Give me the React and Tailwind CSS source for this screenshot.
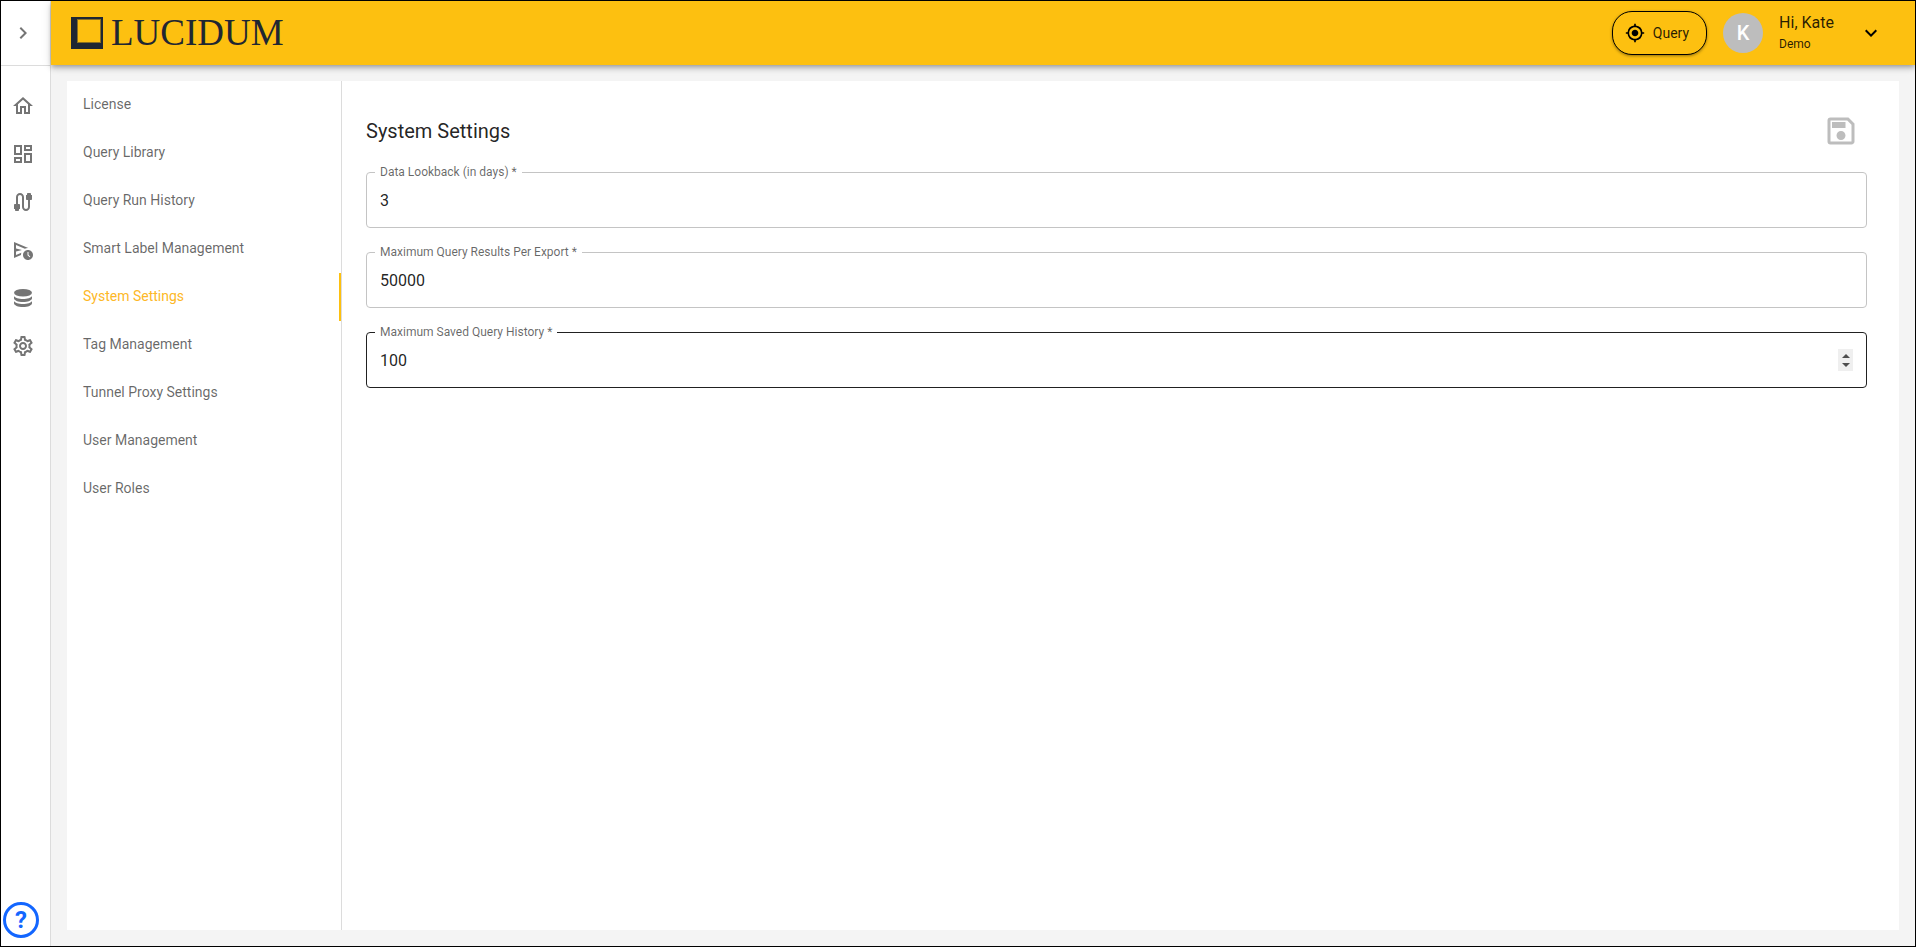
import React, { useRef } from 'react';
import {
  MdChevronRight,
  MdExpandMore,
  MdMyLocation,
  MdOutlineCable,
  MdOutlineDashboard,
  MdOutlineHome,
  MdOutlineSave,
  MdOutlineScheduleSend,
  MdOutlineSettings,
} from 'react-icons/md';

function DatabaseIcon({ size = 24 }) {
  return (
    <svg width={size} height={size} viewBox="0 0 24 24" fill="currentColor">
      <ellipse cx="12" cy="6.8" rx="9" ry="3.8" />
      <path d="M3 10c1 1.900 4.600 3 9 3s8-1.100 9-3v2.200c0 2.100-4 3.800-9 3.800s-9-1.700-9-3.800z" />
      <path d="M3 15c1 1.900 4.600 3 9 3s8-1.100 9-3v2.200c0 2.100-4 3.800-9 3.800s-9-1.700-9-3.800z" />
    </svg>
  );
}

function LogoMark() {
  return (
    <svg width="32" height="32" viewBox="0 0 32 32">
      <rect width="32" height="32" fill="#1f2732" />
      <rect x="6.5" y="2.5" width="23" height="23" fill="#fdc010" stroke="#8a7020" />
    </svg>
  );
}

const sideLinks = [
  { name: 'Home', icon: MdOutlineHome },
  { name: 'Dashboard', icon: MdOutlineDashboard },
  { name: 'Connectors', icon: MdOutlineCable },
  { name: 'Actions', icon: MdOutlineScheduleSend },
  { name: 'Data', icon: DatabaseIcon },
  { name: 'Settings', icon: MdOutlineSettings },
];

const menuItems = [
  'License',
  'Query Library',
  'Query Run History',
  'Smart Label Management',
  'System Settings',
  'Tag Management',
  'Tunnel Proxy Settings',
  'User Management',
  'User Roles',
];

const fields = [
  { id: 'lookback', label: 'Data Lookback (in days) *', value: 3 },
  { id: 'max-export', label: 'Maximum Query Results Per Export *', value: 50000 },
  { id: 'max-history', label: 'Maximum Saved Query History *', value: 100, active: true },
];

function Sidebar() {
  return (
    <aside className="flex w-[50px] shrink-0 flex-col border-r border-[#dcdcdc] bg-white text-[#757575]">
      <button
        type="button"
        aria-label="Expand menu"
        className="flex h-[65px] items-center border-b border-[#dcdcdc] pl-2.5"
      >
        <MdChevronRight size={24} />
      </button>
      <nav className="flex flex-col pt-4">
        {sideLinks.map(({ name, icon: Icon }) => (
          <a key={name} href="#" aria-label={name} className="flex h-12 items-center pl-2.5">
            <Icon size={24} />
          </a>
        ))}
      </nav>
      <button
        type="button"
        aria-label="Help"
        className="mt-auto mb-2 ml-0.5 flex size-9 items-center justify-center rounded-full border-3 border-[#1366ff] text-2xl font-bold text-[#1366ff]"
      >
        ?
      </button>
    </aside>
  );
}

function Header() {
  return (
    <header className="relative flex h-16 shrink-0 items-center justify-between bg-[#fdc010] pr-8 pl-5 shadow-[0_2px_4px_-1px_rgba(0,0,0,0.2),0_4px_5px_0_rgba(0,0,0,0.14),0_1px_10px_0_rgba(0,0,0,0.12)]">
      <a href="#" className="flex items-center gap-2 text-[#1f2732]">
        <LogoMark />
        <span className="font-['Liberation_Serif',serif] text-[37px] leading-8">LUCIDUM</span>
      </a>
      <div className="flex items-center gap-4">
        <button
          type="button"
          className="flex h-11 items-center gap-2 rounded-[20px] border border-black bg-[#fdc010] pr-4 pl-3 text-sm text-black/85 shadow-[0_1px_3px_rgba(0,0,0,0.4)]"
        >
          <MdMyLocation size={20} className="text-black" />
          <span className="pr-px">Query</span>
        </button>
        <div className="flex size-10 items-center justify-center rounded-full bg-[#bdbdbd] text-xl font-medium text-white">
          K
        </div>
        <div className="flex flex-col pb-0.5 text-black/85">
          <span className="text-base leading-6">Hi, Kate</span>
          <span className="text-xs leading-[18px]">Demo</span>
        </div>
        <button type="button" aria-label="Account menu" className="pl-[9px] text-black">
          <MdExpandMore size={24} />
        </button>
      </div>
    </header>
  );
}

function SettingsMenu() {
  return (
    <nav className="w-[275px] shrink-0 border-r border-[#dcdcdc]">
      {menuItems.map((item) => (
        <a
          key={item}
          href="#"
          className={
            item === 'System Settings'
              ? 'flex h-12 items-center border-r-2 border-[#fdc010] px-4 pb-0.5 text-sm text-[#fdb827]'
              : 'flex h-12 items-center px-4 pb-0.5 text-sm text-black/60'
          }
        >
          {item}
        </a>
      ))}
    </nav>
  );
}

function NumberField({ id, label, value, active }) {
  const inputRef = useRef(null);

  return (
    <div className="relative">
      <label
        htmlFor={id}
        className="absolute -top-2 left-[9px] bg-white px-[5px] text-xs leading-4 text-black/60"
      >
        {label}
      </label>
      <input
        ref={inputRef}
        id={id}
        type="number"
        defaultValue={value}
        className={
          active
            ? 'h-14 w-full rounded border border-[#212121] px-[13px] text-base text-black/87 outline-none [&::-webkit-inner-spin-button]:appearance-none'
            : 'h-14 w-full rounded border border-[#c4c4c4] px-[13px] text-base text-black/87 outline-none [&::-webkit-inner-spin-button]:appearance-none'
        }
      />
      {active && (
        <div className="absolute inset-y-0 right-3.5 flex flex-col justify-center">
          <button
            type="button"
            aria-label="Increase"
            onClick={() => inputRef.current.stepUp()}
            className="flex h-[11px] w-[15px] items-center justify-center bg-[#efefef] pt-0.5"
          >
            <svg width="8" height="4" viewBox="0 0 8 4" fill="#4d4d4d">
              <path d="M4 0l4 4H0z" />
            </svg>
          </button>
          <button
            type="button"
            aria-label="Decrease"
            onClick={() => inputRef.current.stepDown()}
            className="flex h-[11px] w-[15px] items-center justify-center bg-[#efefef] pb-0.5"
          >
            <svg width="8" height="4" viewBox="0 0 8 4" fill="#4d4d4d">
              <path d="M4 4L0 0h8z" />
            </svg>
          </button>
        </div>
      )}
    </div>
  );
}

function App() {
  return (
    <div className="flex min-h-screen border border-black font-[Roboto,sans-serif]">
      <Sidebar />
      <div className="flex min-w-0 flex-1 flex-col bg-[#f4f4f4]">
        <Header />
        <main className="flex flex-1 p-4">
          <div className="flex flex-1 bg-white">
            <SettingsMenu />
            <section className="flex-1 py-6 pr-8 pl-6">
              <div className="mb-[15px] flex items-center justify-between">
                <h1 className="text-xl text-black/87">System Settings</h1>
                <button type="button" aria-label="Save" className="p-2 text-[#bdbdbd]">
                  <MdOutlineSave size={36} />
                </button>
              </div>
              <form className="flex flex-col gap-6">
                {fields.map((field) => (
                  <NumberField key={field.id} {...field} />
                ))}
              </form>
            </section>
          </div>
        </main>
      </div>
    </div>
  );
}

export default App;
